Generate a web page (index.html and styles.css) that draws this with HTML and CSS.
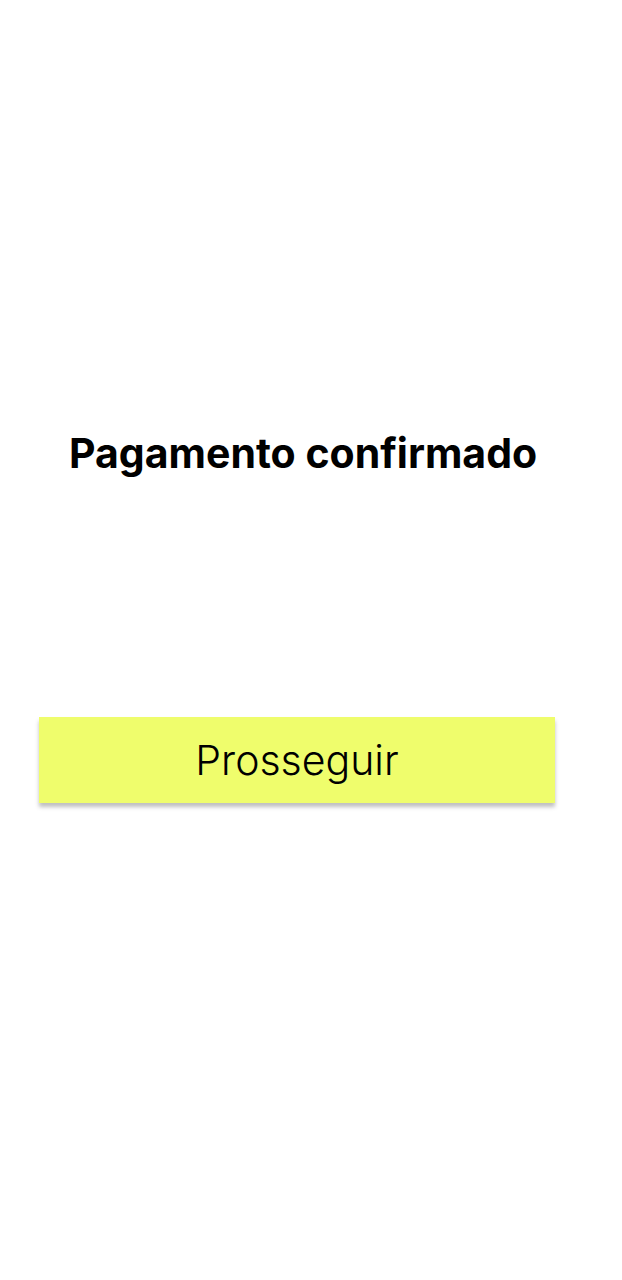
FILE: index.html
```html
<!DOCTYPE html>
<html lang="pt">
<head>
<meta charset="utf-8">
<link rel="stylesheet" href="styles.css">
</head>
<body>
<main class="screen">
  <h1 class="title">Pagamento confirmado</h1>
  <button class="btn">Prosseguir</button>
</main>
</body>
</html>
```
FILE: styles.css
```css
html, body { margin: 0; padding: 0; background: #fff; }
.screen {
  width: 622px;
  height: 1280px;
  display: flex;
  flex-direction: column;
  font-family: Inter, "Noto Sans", sans-serif;
  padding-top: 424px;
  box-sizing: border-box;
}
.title {
  margin: 0 0 0 69px;
  font-size: 41px;
  font-weight: 700;
  line-height: 58px;
  color: #000;
}
.btn {
  margin: 235px 0 0 39px;
  width: 516px;
  height: 86px;
  border: none;
  background: #effd6c;
  box-shadow: 0 4px 4px rgba(0,0,0,0.25);
  font-family: Inter, "Noto Sans", sans-serif;
  font-size: 41px;
  font-weight: 300;
  color: #000;
  padding: 0;
}
```
